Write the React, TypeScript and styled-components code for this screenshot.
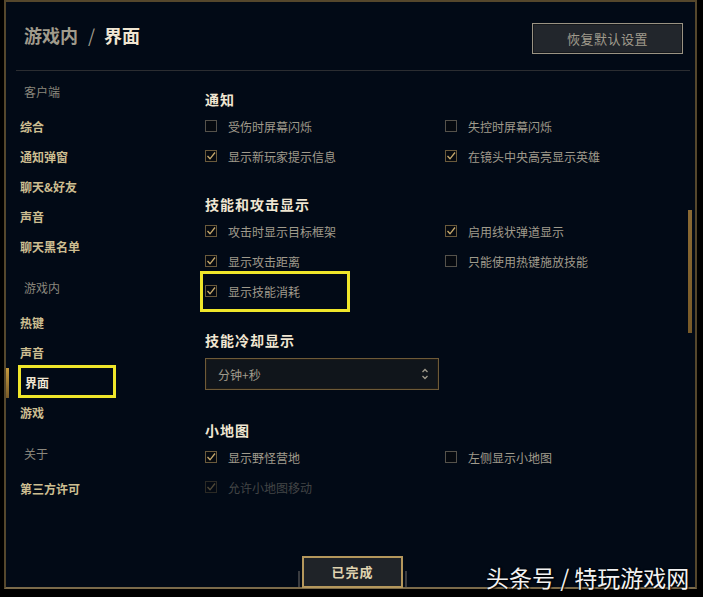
import React from 'react';
import styled, { createGlobalStyle } from 'styled-components';

const Global = createGlobalStyle`
  html, body { margin: 0; padding: 0; background: #000; }
  body { font-family: "Noto Sans CJK SC", "Noto Sans", sans-serif; }
`;

const Page = styled.div`
  width: 703px;
  height: 597px;
  box-sizing: border-box;
  background: #000;
  padding: 0 6px 8px 4px;
  position: relative;
  overflow: hidden;
`;

const Dialog = styled.div`
  height: 100%;
  box-sizing: border-box;
  border: 2px solid #55472c;
  border-bottom-color: #7a6a4a;
  background: #020a16;
  display: flex;
  flex-direction: column;
`;

const Header = styled.div`
  height: 68px;
  box-sizing: border-box;
  display: flex;
  align-items: flex-start;
  justify-content: space-between;
  padding: 21px 12px 0 18px;
`;

const Title = styled.div`
  font-size: 18px;
  line-height: 24px;
  font-weight: 700;
  color: #a09b8c;
`;

const Slash = styled.span`
  margin: 0 9px 0 10px;
  font-weight: 400;
`;

const TitleCurrent = styled.span`
  color: #f0e6d2;
`;

const GhostButton = styled.button`
  width: 151px;
  height: 31px;
  box-sizing: border-box;
  border: 1px solid #9a9383;
  background: #22262c;
  box-shadow: inset 0 0 0 1px #14171b;
  color: #a09b8c;
  font-family: inherit;
  font-size: 13px;
  letter-spacing: 0.5px;
  padding: 0;
`;

const Divider = styled.div`
  height: 1px;
  margin: 0 5px 0 10px;
  background: #2b2d31;
`;

const Body = styled.div`
  flex: 1;
  display: flex;
  min-height: 0;
`;

const Nav = styled.nav`
  width: 184px;
  padding-top: 11px;
  display: flex;
  flex-direction: column;
`;

const NavLabel = styled.div<{ $first?: boolean }>`
  height: 20px;
  line-height: 20px;
  margin: ${p => (p.$first ? '0' : '16px')} 0 10px;
  padding-left: 18px;
  font-size: 12px;
  color: #8a877d;
`;

const NavItem = styled.div<{ $active?: boolean }>`
  position: relative;
  height: 30px;
  line-height: 30px;
  padding-left: ${p => (p.$active ? '19px' : '14px')};
  font-size: 12px;
  font-weight: 700;
  color: ${p => (p.$active ? '#f0e6d2' : '#cdbe91')};
  &::before {
    content: '';
    display: ${p => (p.$active ? 'block' : 'none')};
    position: absolute;
    left: 0;
    top: 0;
    width: 3px;
    height: 30px;
    background: linear-gradient(#c89b3c, #785a28);
  }
`;

const Highlight = styled.div<{ $l: number; $t: number; $w: number; $h: number }>`
  position: absolute;
  left: ${p => p.$l}px;
  top: ${p => p.$t}px;
  width: ${p => p.$w}px;
  height: ${p => p.$h}px;
  box-sizing: border-box;
  border: 3px solid #efe62a;
  pointer-events: none;
`;

const Content = styled.div`
  flex: 1;
  position: relative;
  padding: 18px 0 0 15px;
`;

const Section = styled.section<{ $gap: number }>`
  margin-top: ${p => p.$gap}px;
`;

const SectionTitle = styled.h3`
  margin: 0;
  height: 20px;
  line-height: 20px;
  font-size: 14px;
  font-weight: 700;
  letter-spacing: 1px;
  color: #f0e6d2;
`;

const Grid = styled.div`
  margin-top: 2px;
  display: grid;
  grid-template-columns: 240px 1fr;
`;

const Row = styled.label<{ $disabled?: boolean }>`
  position: relative;
  height: 30px;
  display: flex;
  align-items: center;
  gap: 11px;
  font-size: 12px;
  color: #a09b8c;
  opacity: ${p => (p.$disabled ? 0.4 : 1)};
`;

const Box = styled.span<{ $on?: boolean }>`
  width: 12px;
  height: 12px;
  box-sizing: border-box;
  border: 1px solid ${p => (p.$on ? '#6a5a3c' : '#55524b')};
  background: #05090f;
  display: flex;
  align-items: center;
  justify-content: center;
`;

const Select = styled.div`
  margin-top: 8px;
  width: 234px;
  height: 32px;
  box-sizing: border-box;
  border: 1px solid #6e5a38;
  box-shadow: inset 0 0 0 1px #1c1a16;
  background: #10151b;
  display: flex;
  align-items: center;
  justify-content: space-between;
  padding: 0 9px 0 12px;
  font-size: 12px;
  color: #a09b8c;
`;

const ScrollThumb = styled.div`
  position: absolute;
  right: 3px;
  top: 139px;
  width: 4px;
  height: 123px;
  background: linear-gradient(#8a6a34, #785a28);
`;

const Footer = styled.div`
  height: 32px;
  display: flex;
  justify-content: center;
  align-items: flex-end;
  gap: 2px;
  margin-bottom: -1px;
  padding-left: 4px;
`;

const FooterTick = styled.span`
  width: 2px;
  height: 16px;
  margin-bottom: 1px;
  background: #3a3c40;
`;

const DoneButton = styled.button`
  width: 101px;
  height: 32px;
  box-sizing: border-box;
  border: 2px solid #b4975c;
  background: #1f2328;
  color: #e0d4b0;
  font-family: inherit;
  font-size: 13px;
  font-weight: 700;
  letter-spacing: 1px;
  padding: 0 0 2px;
`;

const Watermark = styled.div`
  position: absolute;
  left: 486px;
  top: 561px;
  font-size: 23px;
  line-height: 32px;
  color: #f2f2f2;
  text-shadow: 0 0 2px #000, 1px 1px 2px #000;
  white-space: nowrap;
`;

const Check = () => (
  <svg width="10" height="10" viewBox="0 0 10 10">
    <polyline points="1.5,5 4,7.8 9,1.5" fill="none" stroke="#c8aa6e" strokeWidth="1.3" />
  </svg>
);

const Checkbox: React.FC<{ on?: boolean; label: string; disabled?: boolean; children?: React.ReactNode }> = ({
  on,
  label,
  disabled,
  children,
}) => (
  <Row $disabled={disabled}>
    <Box $on={on}>{on && <Check />}</Box>
    {label}
    {children}
  </Row>
);

const Chevrons = () => (
  <svg width="8" height="14" viewBox="0 0 8 14">
    <polyline points="1.5,5 4,2.5 6.5,5" fill="none" stroke="#a09b8c" strokeWidth="1.3" />
    <polyline points="1.5,9 4,11.5 6.5,9" fill="none" stroke="#a09b8c" strokeWidth="1.3" />
  </svg>
);

export default function App() {
  return (
    <>
      <Global />
      <Page>
        <Dialog>
          <Header>
            <Title>
              游戏内<Slash>/</Slash>
              <TitleCurrent>界面</TitleCurrent>
            </Title>
            <GhostButton>恢复默认设置</GhostButton>
          </Header>
          <Divider />
          <Body>
            <Nav>
              <NavLabel $first>客户端</NavLabel>
              <NavItem>综合</NavItem>
              <NavItem>通知弹窗</NavItem>
              <NavItem>聊天&amp;好友</NavItem>
              <NavItem>声音</NavItem>
              <NavItem>聊天黑名单</NavItem>
              <NavLabel>游戏内</NavLabel>
              <NavItem>热键</NavItem>
              <NavItem>声音</NavItem>
              <NavItem $active>
                界面
                <Highlight $l={12} $t={-3} $w={98} $h={33} />
              </NavItem>
              <NavItem>游戏</NavItem>
              <NavLabel>关于</NavLabel>
              <NavItem>第三方许可</NavItem>
            </Nav>
            <Content>
              <Section $gap={0}>
                <SectionTitle>通知</SectionTitle>
                <Grid>
                  <Checkbox label="受伤时屏幕闪烁" />
                  <Checkbox label="失控时屏幕闪烁" />
                  <Checkbox on label="显示新玩家提示信息" />
                  <Checkbox on label="在镜头中央高亮显示英雄" />
                </Grid>
              </Section>
              <Section $gap={23}>
                <SectionTitle>技能和攻击显示</SectionTitle>
                <Grid>
                  <Checkbox on label="攻击时显示目标框架" />
                  <Checkbox on label="启用线状弹道显示" />
                  <Checkbox on label="显示攻击距离" />
                  <Checkbox label="只能使用热键施放技能" />
                  <Checkbox on label="显示技能消耗">
                    <Highlight $l={-5} $t={-5} $w={150} $h={41} />
                  </Checkbox>
                </Grid>
              </Section>
              <Section $gap={24}>
                <SectionTitle>技能冷却显示</SectionTitle>
                <Select>
                  分钟+秒
                  <Chevrons />
                </Select>
              </Section>
              <Section $gap={30}>
                <SectionTitle>小地图</SectionTitle>
                <Grid>
                  <Checkbox on label="显示野怪营地" />
                  <Checkbox label="左侧显示小地图" />
                  <Checkbox on disabled label="允许小地图移动" />
                </Grid>
              </Section>
              <ScrollThumb />
            </Content>
          </Body>
          <Footer>
            <FooterTick />
            <DoneButton>已完成</DoneButton>
            <FooterTick />
          </Footer>
        </Dialog>
        <Watermark>头条号 / 特玩游戏网</Watermark>
      </Page>
    </>
  );
}
